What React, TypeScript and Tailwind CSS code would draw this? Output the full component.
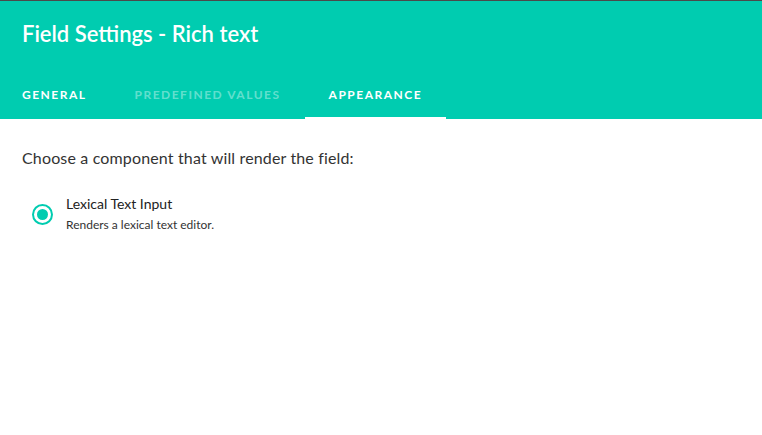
import React from 'react';

const tabs = ['GENERAL', 'PREDEFINED VALUES', 'APPEARANCE'];

const App: React.FC = () => {
  const active = 2;
  return (
    <div className="h-[435px] w-[762px] bg-white font-['Lato',sans-serif]">
      <div className="border-t border-[#4a4a4a] bg-[#00ccb0]">
        <div className="px-[22px] pt-[19px] text-[22px] font-semibold leading-[28px] text-white">
          Field Settings - Rich text
        </div>
        <div className="mt-[26px] flex">
          {tabs.map((tab, i) => (
            <div
              key={tab}
              className={
                'flex h-[45px] items-center border-b-2 px-[24px] pb-[1px] text-[12px] font-bold tracking-[1.5px] ' +
                (i === 0 ? 'ml-[-2px] ' : '') +
                (i === active ? 'border-white text-white' : 'border-transparent ') +
                (i !== active && i === 0 ? 'text-white' : '') +
                (i !== active && i !== 0 ? 'text-white/40' : '')
              }
            >
              {tab}
            </div>
          ))}
        </div>
      </div>
      <div className="px-[22px] pt-[28px]">
        <p className="text-[16px] leading-[22px] tracking-[0.15px] text-[#333]">
          Choose a component that will render the field:
        </p>
        <div className="mt-[25px] flex items-start gap-[13px] pl-[10px]">
          <div className="mt-[10px] flex h-[21px] w-[21px] items-center justify-center rounded-full border-2 border-[#00ccb0]">
            <div className="h-[11px] w-[11px] rounded-full bg-[#00ccb0]" />
          </div>
          <div>
            <div className="text-[14px] leading-[20px] text-[#222]">Lexical Text Input</div>
            <div className="mt-[3px] text-[12px] leading-[16px] text-[#333]">Renders a lexical text editor.</div>
          </div>
        </div>
      </div>
    </div>
  );
};

export default App;
